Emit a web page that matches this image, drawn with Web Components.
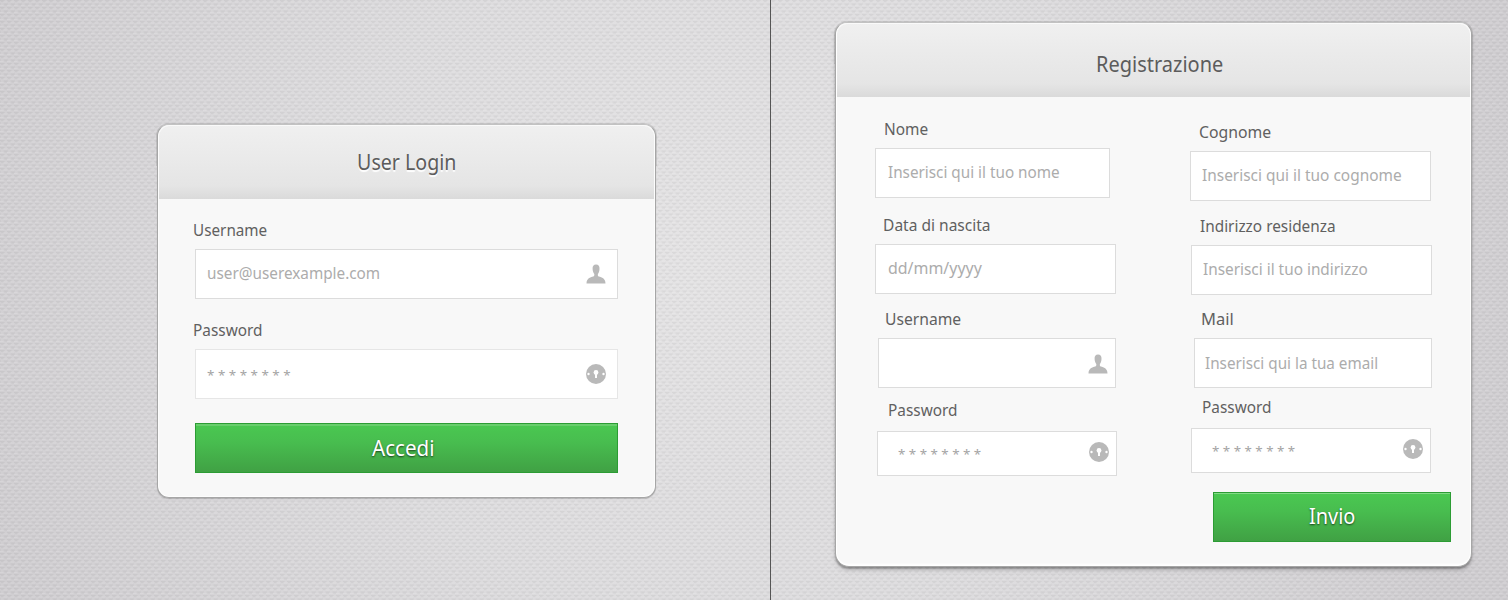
<!DOCTYPE html>
<html lang="it">
<head>
<meta charset="utf-8">
<title>Login e registrazione</title>
<style>
html,body{margin:0;height:600px;overflow:hidden;font-family:"Noto Sans","Open Sans",sans-serif;color:#5c5c5c}
</style>
</head>
<body>
<auth-page>
  <auth-panel>
    <auth-card style="--w:499px;--h:374px;margin:124px 0 0 157px">
      <fit-text slot="title" w="97.5" size="21">User Login</fit-text>
      <form-field label="Username" lw="73" placeholder="user@userexample.com" pw="171" icon="user" style="margin:21px 0 0 37px;--bw:423px"></form-field>
      <form-field label="Password" lw="67.5" placeholder="* * * * * * * *" pw="83.5" px="11.5" icon="lock" stars style="margin:20.5px 0 0 37px;--bw:423px;--line:#e6e6e6;--ty:1px"></form-field>
      <green-button style="margin:24.5px 0 0 37px;--w:423px;--hi:#68ce6c;--hh:2px;--nudge:8px;--drop:2px"><fit-text w="61" size="21.5">Accedi</fit-text></green-button>
    </auth-card>
  </auth-panel>
  <auth-panel line>
    <auth-card deep style="--w:637px;--h:545px;margin:22px 0 0 64px">
      <fit-text slot="title" w="124.5" size="21" style="margin-left:13px">Registrazione</fit-text>
      <form-columns>
        <div slot="a">
          <form-field label="Nome" lw="43" lx="9.5" placeholder="Inserisci qui il tuo nome" pw="171.500" style="margin:22px 0 0 39px;--bw:235px"></form-field>
          <form-field label="Data di nascita" lw="105.5" lx="9" placeholder="dd/mm/yyyy" pw="94.5" px="12" style="margin:17px 0 0 39px;--bw:241px"></form-field>
          <form-field label="Username" lw="75" lx="7.5" icon="user" style="margin:15px 0 0 42px;--bw:238px;--ir:7px;--iy:1px"></form-field>
          <form-field label="Password" lw="67.5" lx="11.5" placeholder="* * * * * * * *" pw="83" px="20" icon="lock" stars style="margin:12px 0 0 41px;--bw:240px;--bh:45px;--gap:11px;--ir:7px;--iy:-3px"></form-field>
        </div>
        <div slot="b">
          <form-field label="Cognome" lw="71" lx="9.5" placeholder="Inserisci qui il tuo cognome" pw="199.5" px="11.5" style="margin:25px 0 0 0;--bw:241px"></form-field>
          <form-field label="Indirizzo residenza" lw="134.5" lx="8.5" placeholder="Inserisci il tuo indirizzo" pw="164" px="11.5" style="margin:15px 0 0 1px;--bw:241px"></form-field>
          <form-field label="Mail" lw="30.5" lx="7.5" placeholder="Inserisci qui la tua email" pw="172" px="10.5" style="margin:14px 0 0 4px;--bw:238px;--ty:1px"></form-field>
          <form-field label="Password" lw="67.5" lx="11.5" placeholder="* * * * * * * *" pw="83" px="20" icon="lock" stars style="margin:9px 0 0 1px;--bw:240px;--bh:45px;--gap:11px;--ir:7px;--iy:-3px"></form-field>
          <green-button style="margin:19px 0 0 23px;--w:238px"><fit-text w="45.5" size="21.5">Invio</fit-text></green-button>
        </div>
      </form-columns>
    </auth-card>
  </auth-panel>
</auth-page>
<script>
const pen = document.createElement('canvas').getContext('2d');

/* Text condensed to a given ink width. */
class FitText extends HTMLElement {
  connectedCallback() {
    const text = this.textContent.trim();
    const w = +this.getAttribute('w'), size = +this.getAttribute('size');
    pen.font = `400 ${size}px "Noto Sans","Open Sans",sans-serif`;
    const m = pen.measureText(text);
    const s = w / (m.actualBoundingBoxLeft + m.actualBoundingBoxRight);
    this.attachShadow({mode: 'open'}).innerHTML = `<style>:host{display:block;flex:none;width:${w}px;white-space:pre}
      span{display:inline-block;font-size:${size}px;transform-origin:0 0;transform:translateX(${m.actualBoundingBoxLeft * s}px) scaleX(${s})}</style><span><slot></slot></span>`;
  }
}
customElements.define('fit-text', FitText);

class AuthPage extends HTMLElement {
  constructor() {
    super();
    this.attachShadow({mode: 'open'}).innerHTML = `<style>
      :host{display:grid;grid-template-columns:770px 738px;height:600px}</style><slot></slot>`;
  }
}
customElements.define('auth-page', AuthPage);

/* Woven backdrop with a soft light in the middle. */
class AuthPanel extends HTMLElement {
  constructor() {
    super();
    const weave = encodeURIComponent(`<svg xmlns="http://www.w3.org/2000/svg" width="7" height="7"><g fill="none" stroke-width="1"><path d="M0 .5H4.500M3.500 4H7M0 4H1" stroke="#000" stroke-opacity=".045"/><path d="M1 1.500H3.500M4.500 5H7" stroke="#000" stroke-opacity=".035"/><path d="M3.500 2H7M0 5.500H3.500" stroke="#fff" stroke-opacity=".13"/></g></svg>`);
    this.attachShadow({mode: 'open'}).innerHTML = `<style>
      :host{display:flex;align-items:flex-start;box-sizing:border-box;height:600px;overflow:hidden;
        background:url("data:image/svg+xml,${weave}"),radial-gradient(ellipse 760px 680px at 90% 45%,#e4e3e4 0,#dddcde 50%,#d0ced1 100%)}
      :host([line]){border-left:1px solid #555;background:url("data:image/svg+xml,${weave}"),radial-gradient(ellipse 760px 680px at 0 45%,#e4e3e4 0,#dddcde 50%,#d0ced1 100%)}
    </style><slot></slot>`;
  }
}
customElements.define('auth-panel', AuthPanel);

class AuthCard extends HTMLElement {
  constructor() {
    super();
    this.attachShadow({mode: 'open'}).innerHTML = `<style>
      :host{display:block;position:relative;box-sizing:border-box;flex:none;width:var(--w);height:var(--h);
        border:1px solid #a6a6a6;border-top-color:#c2c2c2;border-radius:12px;background:#f8f8f8;
        box-shadow:inset 0 0 0 1px #fdfdfd,0 1px 1px rgba(0,0,0,.18)}
      :host([deep]){border-radius:12px 12px 14px 14px;box-shadow:inset 0 0 0 1px #fff,inset 0 -3px 2px -1px #fff,0 2px 2px rgba(0,0,0,.3),0 4px 5px rgba(0,0,0,.09)}
      :host::before{content:"";position:absolute;left:-2px;right:-2px;top:-2px;height:43px;box-sizing:border-box;
        border:1px solid rgba(140,140,140,.28);border-bottom:0;border-radius:13px 13px 0 0}
      header{height:74px;margin:0 1px;border-radius:11px 11px 0 0;box-shadow:inset 0 1px #fafafa;
        background:linear-gradient(#f0f0f0,#e5e5e5 82%,#dadada);display:flex;justify-content:center;line-height:30px;
        box-sizing:border-box;padding-top:22px;text-shadow:0 2px 1px #fff}
      :host([deep]) header{padding-top:26px;text-shadow:none}
    </style><header><slot name="title"></slot></header><slot></slot>`;
  }
}
customElements.define('auth-card', AuthCard);

class FormColumns extends HTMLElement {
  constructor() {
    super();
    this.attachShadow({mode: 'open'}).innerHTML = `<style>
      :host{display:grid;grid-template-columns:354px 1fr;align-items:start}
      slot{display:block}</style><slot name="a"></slot><slot name="b"></slot>`;
  }
}
customElements.define('form-columns', FormColumns);

const ICONS = {
  user: `<svg width="20" height="20" viewBox="0 0 20 20"><path fill="#b9b9b9" d="M10 .5C12.600.5 13.700 2.200 13.500 4.900C13.400 7 12.900 8.700 11.900 9.900C11.700 11.400 11.900 12.200 12.800 12.600C15.800 13.600 19.300 14.200 19.500 19.500H.5C.7 14.200 4.200 13.600 7.200 12.600C8.100 12.200 8.500 11.400 8.300 9.900C7.300 8.700 6.700 7 6.600 4.900C6.400 2.200 7.600.5 10 .5Z"/></svg>`,
  lock: `<svg width="20" height="20" viewBox="0 0 20 20"><circle cx="10" cy="10" r="10" fill="#b9b9b9"/><g fill="#fff"><circle cx="10" cy="8.500" r="2.400"/><path d="M9 9.500h2v4.400H9z"/><circle cx="2.500" cy="10" r="1.200"/><circle cx="17.500" cy="10" r="1.200"/></g></svg>`
};

class FormField extends HTMLElement {
  connectedCallback() {
    const a = (n, d) => this.getAttribute(n) ?? d;
    const stars = this.hasAttribute('stars');
    const ph = a('placeholder', '');
    this.attachShadow({mode: 'open'}).innerHTML = `<style>
      :host{display:block;width:var(--bw)}
      .label{line-height:20px;height:20px;padding-left:${a('lx', 0)}px;margin-bottom:var(--gap,9px);color:#606060}
      .label fit-text{margin-left:${a('lx') ? 0 : '-1px'}}
      .box{display:flex;align-items:center;justify-content:space-between;box-sizing:border-box;height:var(--bh,50px);
        background:#fff;border:1px solid var(--line,#dcdcdc);padding:0 var(--ir,11px) 0 ${a('px', 12) - .5}px}
      .ph{color:${stars ? '#a4a4a4' : '#acacac'};line-height:24px;margin-top:calc(var(--ty,0px) * 2 + ${stars ? -1 : -3}px)}
      svg{display:block;flex:none;margin-left:auto;margin-top:var(--iy,0px)}
    </style>
    <div class="label"><fit-text w="${a('lw')}" size="16.3">${a('label')}</fit-text></div>
    <div class="box">${ph ? `<div class="ph"><fit-text w="${a('pw')}" size="${stars ? 13 : 16.3}">${ph}</fit-text></div>` : ''}${ICONS[a('icon')] || ''}</div>`;
  }
}
customElements.define('form-field', FormField);

class GreenButton extends HTMLElement {
  constructor() {
    super();
    this.attachShadow({mode: 'open'}).innerHTML = `<style>
      :host{display:flex;justify-content:center;align-items:center;box-sizing:border-box;width:var(--w);height:50px;
        border:1px solid #2c9c34;background:linear-gradient(#4ac851,#48bd4f 38%,#40a144);
        box-shadow:inset 0 var(--hh,1px) var(--hi,#83da86);color:#fff;line-height:30px;
        padding:var(--drop,0px) var(--nudge,0px) 0 0;text-shadow:0 1px 2px rgba(0,0,0,.65)}
    </style><slot></slot>`;
  }
}
customElements.define('green-button', GreenButton);
</script>
</body>
</html>
